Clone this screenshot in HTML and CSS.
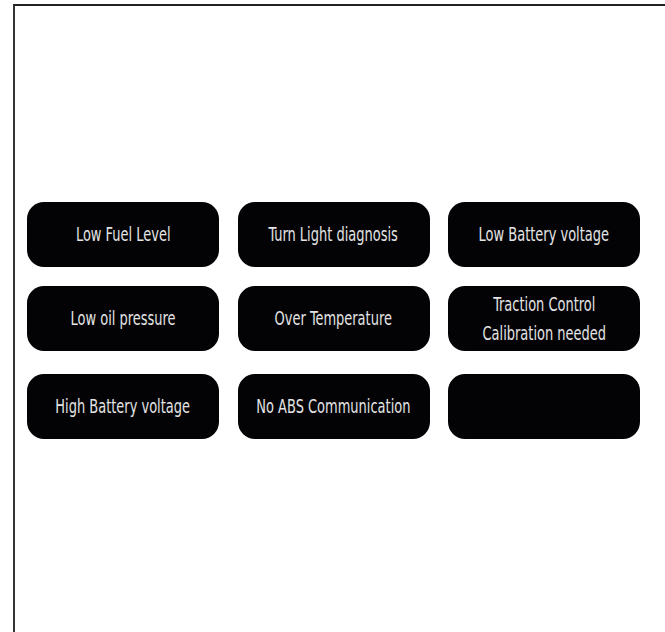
FILE: index.html
```html
<!DOCTYPE html>
<html lang="en">

<head>
  <meta charset="UTF-8">
  <meta name="viewport" content="width=device-width, initial-scale=1.0">
  <link rel="stylesheet" href="styles.css">
  <title>Warnings</title>
</head>

<body>
  <div class="panel">
    <!-- warning tiles -->
    <div class="row">
      <div class="tile"><span>Low Fuel Level</span></div>
      <div class="tile"><span>Turn Light diagnosis</span></div>
      <div class="tile"><span>Low Battery voltage</span></div>
    </div>
    <div class="row">
      <div class="tile"><span>Low oil pressure</span></div>
      <div class="tile"><span>Over Temperature</span></div>
      <div class="tile"><span>Traction Control<br>Calibration needed</span></div>
    </div>
    <div class="row last">
      <div class="tile"><span>High Battery voltage</span></div>
      <div class="tile"><span>No ABS Communication</span></div>
      <div class="tile"></div>
    </div>
  </div>
</body>

</html>
```

FILE: styles.css
```css
body {
  margin: 0;
  padding: 0;
  background-color: #ffffff;
  font-family: "DejaVu Sans Condensed", "Liberation Sans", sans-serif;
}

.panel {
  margin: 4px 0 0 13px;
  height: 640px;
  box-sizing: border-box;
  border-top: 2px solid #222;
  border-left: 2px solid #333;
  padding: 196px 0 0 12px;
  display: flex;
  flex-direction: column;
  gap: 19px;
}

.row {
  display: flex;
  gap: 18.5px;
}

.row.last {
  margin-top: 4px;
}

.tile {
  width: 192px;
  height: 65px;
  background-color: #030306;
  border-radius: 17px;
  display: flex;
  align-items: center;
  justify-content: center;
  text-align: center;
  color: #e4e4e4;
  font-size: 19px;
  line-height: 29px;
}

.tile span {
  display: inline-block;
  white-space: nowrap;
  transform: scaleX(0.76);
}
```
